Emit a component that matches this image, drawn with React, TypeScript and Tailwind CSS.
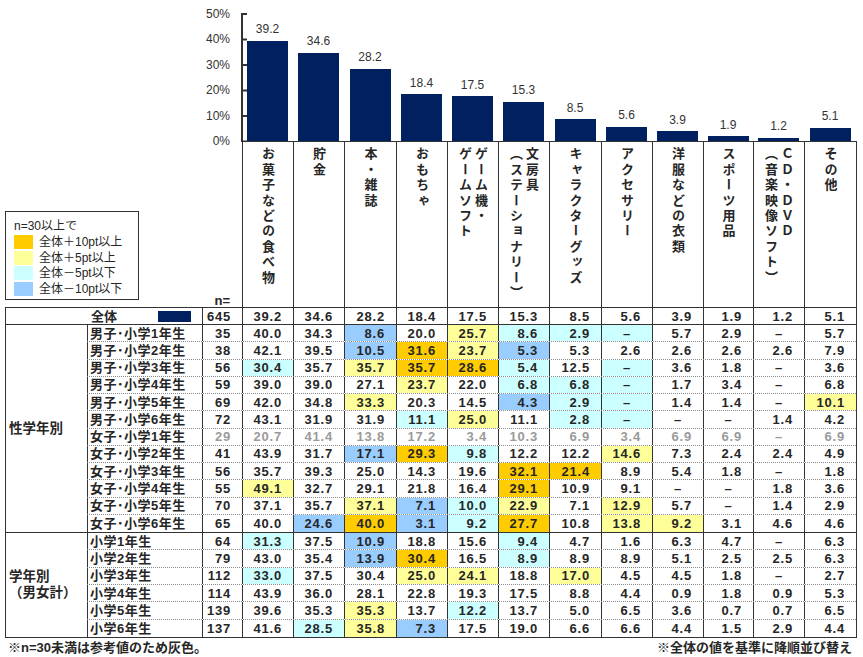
import React from 'react'

type Tone = 'o' | 'y' | 'c' | 'b'

// Highlight colours used in the table (relative to the 全体 row).
const TONE: Record<Tone, string> = {
  o: 'bg-[#ffcc00]',
  y: 'bg-[#ffff99]',
  c: 'bg-[#ccffff]',
  b: 'bg-[#99ccff]',
}

// Widths of the 12 category columns, so chart, headers and table line up.
const COL_W = [
  'w-[51px]',
  'w-[51px]',
  'w-[52px]',
  'w-[51px]',
  'w-[51px]',
  'w-[51px]',
  'w-[52px]',
  'w-[51px]',
  'w-[51px]',
  'w-[50px]',
  'w-[51px]',
  'w-[52px]',
]

interface Category {
  lines: string[]
  total: string
}

const CATEGORIES: Category[] = [
  { lines: ['お菓子などの食べ物'], total: '39.2' },
  { lines: ['貯金'], total: '34.6' },
  { lines: ['本・雑誌'], total: '28.2' },
  { lines: ['おもちゃ'], total: '18.4' },
  { lines: ['ゲーム機・', 'ゲームソフト'], total: '17.5' },
  { lines: ['文房具', '（ステーショナリー）'], total: '15.3' },
  { lines: ['キャラクターグッズ'], total: '8.5' },
  { lines: ['アクセサリー'], total: '5.6' },
  { lines: ['洋服などの衣類'], total: '3.9' },
  { lines: ['スポーツ用品'], total: '1.9' },
  { lines: ['ＣＤ・ＤＶＤ', '（音楽映像ソフト）'], total: '1.2' },
  { lines: ['その他'], total: '5.1' },
]

interface Row {
  label: string
  n: string
  cells: string[]
  muted?: boolean
}

const BY_GENDER: Row[] = [
  { label: '男子･小学1年生', n: '35', cells: ['40.0', '34.3', '8.6:b', '20.0', '25.7:y', '8.6:c', '2.9:c', '–:c', '5.7', '2.9', '–', '5.7'] },
  { label: '男子･小学2年生', n: '38', cells: ['42.1', '39.5', '10.5:b', '31.6:o', '23.7:y', '5.3:b', '5.3', '2.6', '2.6', '2.6', '2.6', '7.9'] },
  { label: '男子･小学3年生', n: '56', cells: ['30.4:c', '35.7', '35.7:y', '35.7:o', '28.6:o', '5.4:c', '12.5', '–:c', '3.6', '1.8', '–', '3.6'] },
  { label: '男子･小学4年生', n: '59', cells: ['39.0', '39.0', '27.1', '23.7:y', '22.0', '6.8:c', '6.8:c', '–:c', '1.7', '3.4', '–', '6.8'] },
  { label: '男子･小学5年生', n: '69', cells: ['42.0', '34.8', '33.3:y', '20.3', '14.5', '4.3:b', '2.9:c', '–:c', '1.4', '1.4', '–', '10.1:y'] },
  { label: '男子･小学6年生', n: '72', cells: ['43.1', '31.9', '31.9', '11.1:c', '25.0:y', '11.1', '2.8:c', '–:c', '–', '–', '1.4', '4.2'] },
  { label: '女子･小学1年生', n: '29', muted: true, cells: ['20.7', '41.4', '13.8', '17.2', '3.4', '10.3', '6.9', '3.4', '6.9', '6.9', '–', '6.9'] },
  { label: '女子･小学2年生', n: '41', cells: ['43.9', '31.7', '17.1:b', '29.3:o', '9.8:c', '12.2', '12.2', '14.6:y', '7.3', '2.4', '2.4', '4.9'] },
  { label: '女子･小学3年生', n: '56', cells: ['35.7', '39.3', '25.0', '14.3', '19.6', '32.1:o', '21.4:o', '8.9', '5.4', '1.8', '–', '1.8'] },
  { label: '女子･小学4年生', n: '55', cells: ['49.1:y', '32.7', '29.1', '21.8', '16.4', '29.1:o', '10.9', '9.1', '–', '–', '1.8', '3.6'] },
  { label: '女子･小学5年生', n: '70', cells: ['37.1', '35.7', '37.1:y', '7.1:b', '10.0:c', '22.9:y', '7.1', '12.9:y', '5.7', '–', '1.4', '2.9'] },
  { label: '女子･小学6年生', n: '65', cells: ['40.0', '24.6:b', '40.0:o', '3.1:b', '9.2:c', '27.7:o', '10.8', '13.8:y', '9.2:y', '3.1', '4.6', '4.6'] },
]

const BY_GRADE: Row[] = [
  { label: '小学1年生', n: '64', cells: ['31.3:c', '37.5', '10.9:b', '18.8', '15.6', '9.4:c', '4.7', '1.6', '6.3', '4.7', '–', '6.3'] },
  { label: '小学2年生', n: '79', cells: ['43.0', '35.4', '13.9:b', '30.4:o', '16.5', '8.9:c', '8.9', '8.9', '5.1', '2.5', '2.5', '6.3'] },
  { label: '小学3年生', n: '112', cells: ['33.0:c', '37.5', '30.4', '25.0:y', '24.1:y', '18.8', '17.0:y', '4.5', '4.5', '1.8', '–', '2.7'] },
  { label: '小学4年生', n: '114', cells: ['43.9', '36.0', '28.1', '22.8', '19.3', '17.5', '8.8', '4.4', '0.9', '1.8', '0.9', '5.3'] },
  { label: '小学5年生', n: '139', cells: ['39.6', '35.3', '35.3:y', '13.7', '12.2:c', '13.7', '5.0', '6.5', '3.6', '0.7', '0.7', '6.5'] },
  { label: '小学6年生', n: '137', cells: ['41.6', '28.5:c', '35.8:y', '7.3:b', '17.5', '19.0', '6.6', '6.6', '4.4', '1.5', '2.9', '4.4'] },
]

const LEGEND: { tone: Tone; text: string }[] = [
  { tone: 'o', text: '全体＋10pt以上' },
  { tone: 'y', text: '全体＋5pt以上' },
  { tone: 'c', text: '全体－5pt以下' },
  { tone: 'b', text: '全体－10pt以下' },
]

const PX_PER_PCT = 2.555

function ValueCell({ cell, width, muted }: { cell: string; width: string; muted?: boolean }) {
  const [value, tone] = cell.split(':') as [string, Tone | undefined]
  const dash = value === '–'

  return (
    <div
      className={`${width} ${tone ? TONE[tone] : ''} flex h-full items-center border-l border-[#333] tracking-[0.8px] ${
        dash ? 'justify-center' : 'justify-end pr-[11px]'
      } ${muted ? 'text-[#9a9a9a]' : 'text-[#262626]'}`}
    >
      {value}
    </div>
  )
}

function DataRow({ row, height, last }: { row: Row; height: string; last: boolean }) {
  return (
    <div className={`flex ${height} ${last ? '' : 'border-b border-dotted border-[#8a8a8a]'}`}>
      <div className="flex h-full w-[115px] items-center border-l border-[#333] pl-[2px] tracking-[0.5px] text-[#262626]">
        {row.label}
      </div>
      <div
        className={`flex h-full w-[40px] items-center justify-end border-l border-[#333] pr-[11px] tracking-[0.8px] ${
          row.muted ? 'text-[#9a9a9a]' : 'text-[#262626]'
        }`}
      >
        {row.n}
      </div>
      {row.cells.map((cell, i) => (
        <ValueCell key={i} cell={cell} width={COL_W[i]} muted={row.muted} />
      ))}
    </div>
  )
}

function Section({ title, rows, height }: { title: string[]; rows: Row[]; height: string }) {
  return (
    <div className="flex border-b border-[#333]">
      <div className="flex w-[82px] flex-col justify-center pl-[3px] text-[13.5px] leading-[16px] text-[#262626]">
        {title.map((t) => (
          <div key={t}>{t}</div>
        ))}
      </div>
      <div className="flex flex-col">
        {rows.map((row, i) => (
          <DataRow key={row.label} row={row} height={height} last={i === rows.length - 1} />
        ))}
      </div>
    </div>
  )
}

export default function App() {
  return (
    <div className="relative h-[657px] w-[863px] overflow-hidden bg-white text-[#262626] [font-family:'Liberation_Sans','Noto_Sans_CJK_JP',sans-serif]">
      {/* chart + vertical headers */}
      <div className="flex">
        <div className="flex w-[242px] flex-col">
          <div className="flex h-[141px] flex-col items-end pr-[12px] pt-[1.5px] text-[12px] text-[#333]">
            {['50%', '40%', '30%', '20%', '10%', '0%'].map((t) => (
              <div key={t} className="h-[25.5px] leading-[25.5px]">
                {t}
              </div>
            ))}
          </div>
          <div className="flex h-[166px] items-end justify-between">
            <div className="mb-[7px] ml-[5px] h-[89px] w-[134px] border border-[#333] pl-[8px] pt-[7px] text-[12px] font-normal">
              <div className="leading-[14px]">n=30以上で</div>
              <div className="mt-[2px] flex flex-col gap-[1.5px]">
                {LEGEND.map((l) => (
                  <div key={l.text} className="flex h-[14px] items-center gap-[6px]">
                    <div className={`h-[14px] w-[19px] ${TONE[l.tone]}`} />
                    <span className="leading-[14px]">{l.text}</span>
                  </div>
                ))}
              </div>
            </div>
            <div className="pr-[12px] text-[13px] font-bold leading-[12px]">n=</div>
          </div>
        </div>

        <div className="flex flex-col">
          <div className="relative flex h-[141px] items-end">
            <svg className="absolute left-[-1px] top-[13px]" width="8" height="129" viewBox="0 0 8 129">
              <rect x="0" y="0" width="2" height="129" fill="#333" />
              {[0, 1, 2, 3, 4, 5].map((i) => (
                <rect key={i} x="0" y={i * 25.5} width="6" height="2" fill="#333" />
              ))}
            </svg>
            {CATEGORIES.map((c, i) => (
              <div key={i} className={`${COL_W[i]} flex flex-col items-center justify-end`}>
                <div className="mb-[4.5px] text-[12px] leading-[14px] text-[#333]">{c.total}</div>
                <div
                  className="w-[41px] bg-[#002060]"
                  style={{ height: `${parseFloat(c.total) * PX_PER_PCT}px` }}
                />
              </div>
            ))}
          </div>
          <div className="flex h-[166px] border-r border-t border-[#333]">
            {CATEGORIES.map((c, i) => (
              <div key={i} className={`${COL_W[i]} flex justify-center border-l border-[#333] pt-[5px]`}>
                <div className="text-[13px] font-bold leading-[16px] tracking-[2.4px] text-[#262626] [font-family:'Noto_Sans_CJK_JP',sans-serif] [writing-mode:vertical-rl]">
                  {c.lines.map((line, j) => (
                    <React.Fragment key={j}>
                      {j > 0 ? <br /> : null}
                      {line}
                    </React.Fragment>
                  ))}
                </div>
              </div>
            ))}
          </div>
        </div>
      </div>

      {/* table */}
      <div className="ml-[5px] w-[852px] border-r border-t border-[#333] text-[13px] font-bold leading-none">
        <div className="flex h-[17px] border-b border-[#333]">
          <div className="flex h-full w-[197px] items-center border-l border-[#333] pl-[85px]">
            <span>全体</span>
            <div className="ml-[41px] h-[11px] w-[33px] bg-[#002060]" />
          </div>
          <div className="flex h-full w-[40px] items-center justify-end border-l border-[#333] pr-[11px] tracking-[0.8px]">
            645
          </div>
          {CATEGORIES.map((c, i) => (
            <ValueCell key={i} cell={c.total} width={COL_W[i]} />
          ))}
        </div>
        <div className="border-l border-[#333]">
          <Section title={['性学年別']} rows={BY_GENDER} height="h-[17.25px]" />
          <Section title={['学年別', '（男女計）']} rows={BY_GRADE} height="h-[17.33px]" />
        </div>
      </div>

      <div className="mt-[2px] flex justify-between pl-[8px] pr-[11px] text-[13px] font-bold leading-[16px] text-[#262626]">
        <span>※n=30未満は参考値のため灰色。</span>
        <span>※全体の値を基準に降順並び替え</span>
      </div>
    </div>
  )
}
